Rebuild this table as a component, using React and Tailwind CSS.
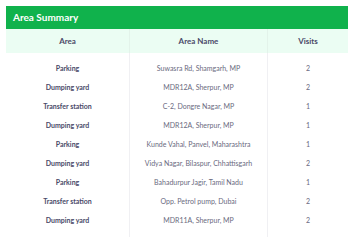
import React from 'react';

const rows = [
  { area: 'Parking', name: 'Suwasra Rd, Shamgarh, MP', visits: 2 },
  { area: 'Dumping yard', name: 'MDR12A, Sherpur, MP', visits: 2 },
  { area: 'Transfer station', name: 'C-2, Dongre Nagar, MP', visits: 1 },
  { area: 'Dumping yard', name: 'MDR12A, Sherpur, MP', visits: 1 },
  { area: 'Parking', name: 'Kunde Vahal, Panvel, Maharashtra', visits: 1 },
  { area: 'Dumping yard', name: 'Vidya Nagar, Bilaspur, Chhattisgarh', visits: 2 },
  { area: 'Parking', name: 'Bahadurpur Jagir, Tamil Nadu', visits: 1 },
  { area: 'Transfer station', name: 'Opp. Petrol pump, Dubai', visits: 2 },
  { area: 'Dumping yard', name: 'MDR11A, Sherpur, MP', visits: 2 },
];

function App() {
  return (
    <div className="w-[353px] h-[241px] bg-white pt-[6px] pl-[6px] font-['Lato',sans-serif] overflow-hidden">
      <div className="w-[342px]">
        <div className="h-[23px] bg-[#10b24c] flex items-center pl-[7px]">
          <span className="text-white font-bold text-[10px]">Area Summary</span>
        </div>
        <div className="flex h-[24px] bg-[#ebfdf3] text-[8px] font-bold text-[#4a4a68]">
          <div className="w-[123px] flex items-center justify-center">Area</div>
          <div className="w-[138px] flex items-center justify-center border-l border-[#e3f3ea]">Area Name</div>
          <div className="w-[81px] flex items-center justify-center border-l border-[#e3f3ea]">Visits</div>
        </div>
        <div className="flex h-[184px]">
          <div className="w-[123px] pt-[6px]">
            {rows.map((r, i) => (
              <div key={i} className="h-[19px] flex items-center justify-center text-[7px] font-bold text-[#4a4a68]">
                {r.area}
              </div>
            ))}
          </div>
          <div className="w-[138px] pt-[6px] border-l border-[#f0f0f3]">
            {rows.map((r, i) => (
              <div key={i} className="h-[19px] flex items-center justify-center text-[7px] text-[#6a6a80]">
                {r.name}
              </div>
            ))}
          </div>
          <div className="w-[81px] pt-[6px] border-l border-[#f0f0f3]">
            {rows.map((r, i) => (
              <div key={i} className="h-[19px] flex items-center justify-center text-[7px] text-[#6a6a80]">
                {r.visits}
              </div>
            ))}
          </div>
        </div>
      </div>
    </div>
  );
}

export default App;
